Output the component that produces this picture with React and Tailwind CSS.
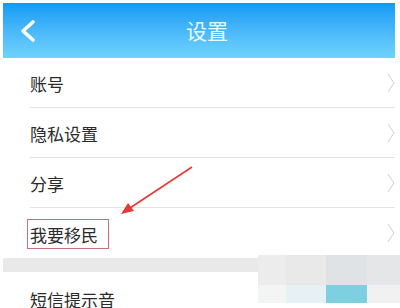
const rows = ["账号", "隐私设置", "分享", "我要移民"];

const mosaic = [
  ["#ececec", "#e9e9e9", "#dfe3e5", "#e5e6e7"],
  ["#f3f4f4", "#e6f1f4", "#7ecfdf", "#f1f1f1"],
];

function Chevron() {
  return (
    <svg width="8" height="22" viewBox="0 0 8 22" className="shrink-0">
      <path d="M1 2 L7 11 L1 20" fill="none" stroke="#cfcfcf" strokeWidth="1" />
    </svg>
  );
}

function BackIcon() {
  return (
    <svg width="18" height="24" viewBox="0 0 18 24" className="absolute left-[16px] top-[16px]">
      <path d="M14 3 L4 12 L14 21" fill="none" stroke="white" strokeWidth="3.6" strokeLinecap="round" strokeLinejoin="round" />
    </svg>
  );
}

export default function App() {
  return (
    <div
      className="relative w-[400px] h-[308px] overflow-hidden bg-white"
      style={{ fontFamily: '"Noto Sans CJK SC", "Noto Sans", sans-serif' }}
    >
      <div className="ml-[3px] mt-[3px] w-[392px]">
        {/* 顶部标题栏 */}
        <header className="relative h-[55px] flex items-center justify-center bg-gradient-to-b from-[#0a9bf5] to-[#70d3fd]">
          <BackIcon />
          <h1 className="text-[21px] text-white/90 ml-[16px]">设置</h1>
        </header>

        {rows.map((r, i) => (
          <div key={r} className="pl-[27px]">
            <div
              className={`h-[50px] flex items-center justify-between ${
                i < rows.length - 1 ? "border-b border-[#e3e3e3]" : ""
              }`}
            >
              <span className="text-[17px] text-[#2a2a2a] leading-none pt-[2px]">{r}</span>
              <Chevron />
            </div>
          </div>
        ))}

        <div className="h-[14px] bg-[#e9e9e9]" />

        <div className="pl-[27px] h-[36px] pt-[16px]">
          <span className="text-[17px] text-[#2a2a2a] leading-none">短信提示音</span>
        </div>
      </div>

      {/* 标注：红框 + 箭头 */}
      <div className="absolute left-[27px] top-[219px] w-[82px] h-[30px] border border-[#c9707e]" />
      <svg className="absolute left-0 top-0" width="400" height="308">
        <line x1="192" y1="167" x2="130" y2="208" stroke="#e53935" strokeWidth="1.6" />
        <polygon points="121,214 128,203 134,211" fill="#e53935" />
      </svg>

      {/* 马赛克 */}
      <div className="absolute left-[258px] top-[255px] grid grid-cols-[28px_40px_41px_33px] grid-rows-[30px_18px]">
        {mosaic.flat().map((c, i) => (
          <div key={i} style={{ background: c }} />
        ))}
      </div>
    </div>
  );
}
